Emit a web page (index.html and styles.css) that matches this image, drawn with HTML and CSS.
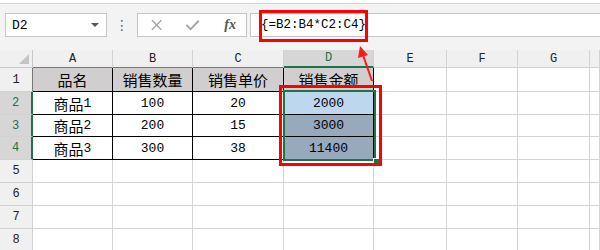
FILE: index.html
```html
<!DOCTYPE html>
<html lang="zh-CN">
<head>
    <meta charset="UTF-8">
    <title>数组公式</title>
    <link rel="stylesheet" href="styles.css">
</head>
<body>
    <div class="screen">
        <div class="toolbar">
            <div class="namebox">
                <span>D2</span>
                <span class="caret"></span>
            </div>
            <div class="dots">⋮</div>
            <div class="fxbox">
                <svg class="icon" width="14" height="14" viewBox="0 0 14 14">
                    <path d="M2 2 L12 12 M12 2 L2 12" stroke="#a6a6a6" stroke-width="1.6" fill="none"/>
                </svg>
                <svg class="icon" width="16" height="14" viewBox="0 0 16 14">
                    <path d="M1.5 7 L6 11.5 L14.5 2.5" stroke="#a6a6a6" stroke-width="2" fill="none"/>
                </svg>
                <span class="fx">fx</span>
            </div>
            <div class="formula">{=B2:B4*C2:C4}</div>
            <div class="mark mark-formula"></div>
        </div>

        <div class="sheet">
            <div class="corner"><span class="tri"></span></div>
            <div class="colhead edge">A</div>
            <div class="colhead edge">B</div>
            <div class="colhead edge">C</div>
            <div class="colhead sel edge">D</div>
            <div class="colhead">E</div>
            <div class="colhead">F</div>
            <div class="colhead">G</div>
            <div class="colhead"></div>

            <div class="rowhead edge">1</div>
            <div class="cell tbl head zh">品名</div>
            <div class="cell tbl head zh">销售数量</div>
            <div class="cell tbl head zh">销售单价</div>
            <div class="cell tbl head zh">销售金额</div>
            <div class="cell"></div><div class="cell"></div><div class="cell"></div><div class="cell"></div>

            <div class="rowhead sel">2</div>
            <div class="cell tbl"><span class="zh">商品</span>1</div>
            <div class="cell tbl">100</div>
            <div class="cell tbl">20</div>
            <div class="cell tbl active">2000</div>
            <div class="cell"></div><div class="cell"></div><div class="cell"></div><div class="cell"></div>

            <div class="rowhead sel">3</div>
            <div class="cell tbl"><span class="zh">商品</span>2</div>
            <div class="cell tbl">200</div>
            <div class="cell tbl">15</div>
            <div class="cell tbl picked">3000</div>
            <div class="cell"></div><div class="cell"></div><div class="cell"></div><div class="cell"></div>

            <div class="rowhead sel">4</div>
            <div class="cell tbl"><span class="zh">商品</span>3</div>
            <div class="cell tbl">300</div>
            <div class="cell tbl">38</div>
            <div class="cell tbl picked">11400</div>
            <div class="cell"></div><div class="cell"></div><div class="cell"></div><div class="cell"></div>

            <div class="rowhead">5</div>
            <div class="cell"></div><div class="cell"></div><div class="cell"></div><div class="cell"></div>
            <div class="cell"></div><div class="cell"></div><div class="cell"></div><div class="cell"></div>

            <div class="rowhead">6</div>
            <div class="cell"></div><div class="cell"></div><div class="cell"></div><div class="cell"></div>
            <div class="cell"></div><div class="cell"></div><div class="cell"></div><div class="cell"></div>

            <div class="rowhead">7</div>
            <div class="cell"></div><div class="cell"></div><div class="cell"></div><div class="cell"></div>
            <div class="cell"></div><div class="cell"></div><div class="cell"></div><div class="cell"></div>

            <div class="rowhead">8</div>
            <div class="cell"></div><div class="cell"></div><div class="cell"></div><div class="cell"></div>
            <div class="cell"></div><div class="cell"></div><div class="cell"></div><div class="cell"></div>

            <!-- selection and callouts -->
            <div class="selection"><span class="handle"></span></div>
            <div class="mark mark-cells"></div>
        </div>

        <svg class="arrow" width="30" height="40" viewBox="0 0 30 40">
            <path d="M20 36 L11 10" stroke="#ff1a1a" stroke-width="2" fill="none"/>
            <path d="M8 1 L6 13 L16 10 Z" fill="#ff1a1a"/>
        </svg>
    </div>
</body>
</html>
```

FILE: styles.css
```css
* {
    box-sizing: border-box;
}

body {
    margin: 0;
    background: #ffffff;
    font-family: 'Liberation Mono', 'Noto Sans CJK SC', monospace;
    font-size: 13px;
    color: #000000;
}

.screen {
    position: relative;
    width: 600px;
    height: 250px;
    overflow: hidden;
}

.toolbar {
    position: relative;
    height: 47px;
    margin-top: 3px;
    border-top: 1px solid #d4d4d4;
    background: #f3f3f3;
    display: flex;
    align-items: flex-start;
    padding: 9px 0 0 5px;
}

.namebox {
    width: 102px;
    height: 24px;
    background: #ffffff;
    border: 1px solid #c6c6c6;
    display: flex;
    align-items: center;
    justify-content: space-between;
    padding: 0 7px 0 6px;
    font-size: 13px;
}

.caret {
    width: 0;
    height: 0;
    border-left: 4px solid transparent;
    border-right: 4px solid transparent;
    border-top: 4px solid #555555;
}

.dots {
    width: 30px;
    height: 24px;
    text-align: center;
    line-height: 24px;
    color: #666666;
    font-family: 'DejaVu Sans', sans-serif;
    font-size: 14px;
}

.fxbox {
    width: 110px;
    height: 24px;
    background: #ffffff;
    border: 1px solid #c6c6c6;
    display: flex;
    align-items: center;
    padding: 0 10px 0 12px;
    gap: 22px;
}

.fx {
    font-family: 'Liberation Serif', serif;
    font-style: italic;
    font-weight: bold;
    font-size: 14px;
    color: #555555;
    margin-left: 2px;
}

.formula {
    flex: 1;
    height: 24px;
    margin-left: 3px;
    background: #ffffff;
    border: 1px solid #c6c6c6;
    border-right: none;
    line-height: 22px;
    padding-left: 10px;
    font-size: 12.5px;
}

.sheet {
    position: relative;
    display: grid;
    grid-template-columns: 33px 80px 80px 91px 90px 73px 71px 72px 10px;
    grid-template-rows: 18px 24px 23px 22px 23px 23px 23px 23px 23px;
}

.corner {
    position: relative;
    background: #f0f0f0;
    border-right: 1px solid #c8c8c8;
    border-bottom: 1px solid #c8c8c8;
}

.tri {
    position: absolute;
    right: 3px;
    bottom: 3px;
    width: 0;
    height: 0;
    border-left: 10px solid transparent;
    border-bottom: 10px solid #c4c4c4;
}

.colhead,
.rowhead {
    background: #f0f0f0;
    border-right: 1px solid #d2d2d2;
    border-bottom: 1px solid #d2d2d2;
    display: flex;
    align-items: center;
    justify-content: center;
    font-size: 12px;
    color: #222222;
}

.colhead.edge {
    border-bottom-color: #777777;
}

.rowhead.edge {
    border-right-color: #777777;
}

.colhead.sel {
    background: #d6d6d6;
    color: #217346;
    border-bottom: 2px solid #217346;
}

.rowhead.sel {
    background: #d6d6d6;
    color: #217346;
    border-right: 2px solid #217346;
}

.cell {
    border-right: 1px solid #d4d4d4;
    border-bottom: 1px solid #d4d4d4;
    display: flex;
    align-items: center;
    justify-content: center;
    font-size: 13px;
}

.cell.tbl {
    border-right-color: #000000;
    border-bottom-color: #000000;
}

.zh {
    font-family: 'Noto Sans CJK SC', sans-serif;
    font-size: 15px;
    line-height: 1;
}

.head {
    background: #d0cece;
}

.active {
    background: #bdd7ee;
}

.picked {
    background: #97a9bc;
}

.selection {
    position: absolute;
    left: 283px;
    top: 40px;
    width: 93px;
    height: 71px;
    border: 2px solid #217346;
}

.handle {
    position: absolute;
    right: -6px;
    bottom: -6px;
    width: 7px;
    height: 7px;
    background: #217346;
    border: 1px solid #ffffff;
}

.mark {
    position: absolute;
    border: 3px solid #ff0000;
}

.mark-formula {
    left: 259px;
    top: 6px;
    width: 109px;
    height: 32px;
}

.mark-cells {
    left: 279px;
    top: 35px;
    width: 103px;
    height: 81px;
}

.arrow {
    position: absolute;
    left: 352px;
    top: 45px;
}
```
